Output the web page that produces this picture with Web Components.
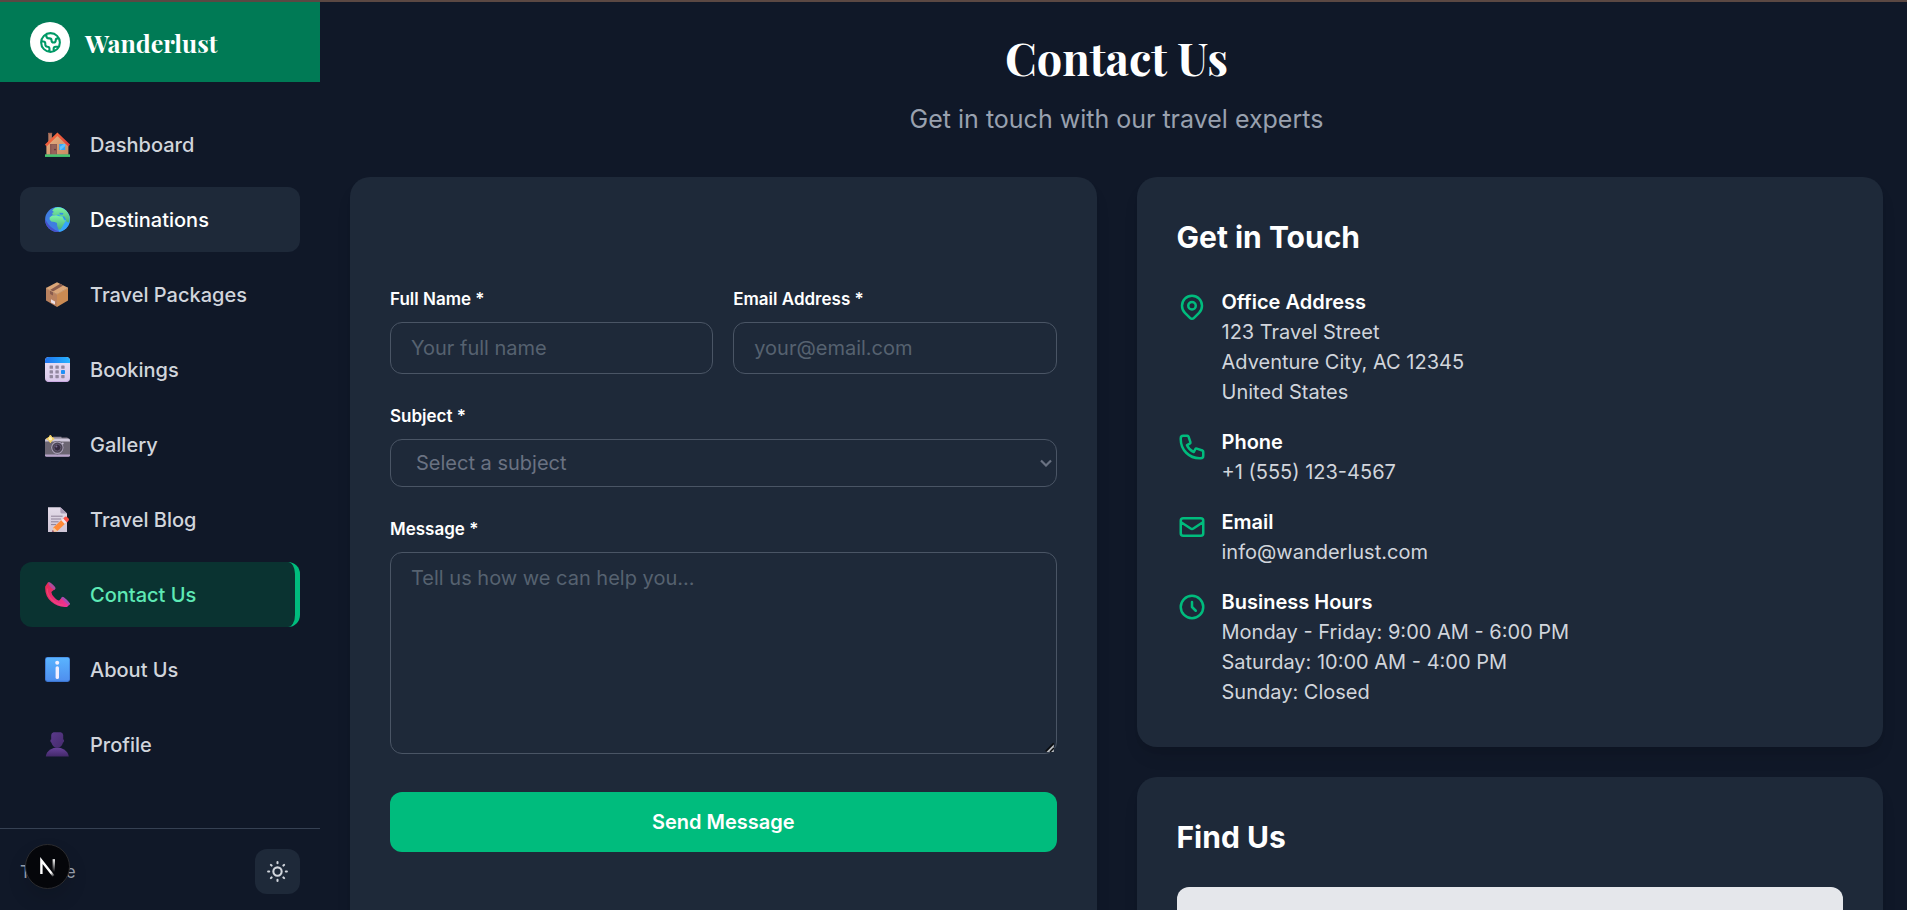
<!DOCTYPE html>
<html lang="en">
<head>
<meta charset="utf-8">
<meta name="viewport" content="width=device-width, initial-scale=1">
<title>Contact Us - Wanderlust</title>
<style>
  :root {
    --page: #101828;
    --card: #1e2939;
    --line: #364153;
    --field-line: #4a5565;
    --soft: #d1d5dc;
    --muted: #99a1af;
    --hint: #566270;
    --green: #00bc7d;
    --display: "Playfair Display", "Liberation Serif", serif;
  }
  html, body { height: 100%; }
  body {
    margin: 0;
    background: var(--page);
    color: #fff;
    font: 400 20px/30px Inter, "Liberation Sans", sans-serif;
    overflow: hidden;
  }
</style>
</head>
<body>
<app-shell>
  <side-bar slot="side">
    <nav-item icon="house">Dashboard</nav-item>
    <nav-item icon="earth" state="hovered">Destinations</nav-item>
    <nav-item icon="box">Travel Packages</nav-item>
    <nav-item icon="calendar">Bookings</nav-item>
    <nav-item icon="camera">Gallery</nav-item>
    <nav-item icon="memo">Travel Blog</nav-item>
    <nav-item icon="phone" state="active">Contact Us</nav-item>
    <nav-item icon="info">About Us</nav-item>
    <nav-item icon="person">Profile</nav-item>
  </side-bar>
  <page-title>Contact Us<span slot="sub">Get in touch with our travel experts</span></page-title>
  <two-columns>
    <panel-card slot="left"><contact-form></contact-form></panel-card>
    <panel-card slot="right" heading="Get in Touch">
      <info-list>
        <info-item icon="pin" heading="Office Address">123 Travel Street<br>Adventure City, AC 12345<br>United States</info-item>
        <info-item icon="call" heading="Phone">+1 (555) 123-4567</info-item>
        <info-item icon="mail" heading="Email">info@wanderlust.com</info-item>
        <info-item icon="clock" heading="Business Hours">Monday - Friday: 9:00 AM - 6:00 PM<br>Saturday: 10:00 AM - 4:00 PM<br>Sunday: Closed</info-item>
      </info-list>
    </panel-card>
    <panel-card slot="right" heading="Find Us"><map-box></map-box></panel-card>
  </two-columns>
</app-shell>
<dev-badge></dev-badge>

<script>
const base = `*, *::before { box-sizing: border-box; } h1, h2, h3, p { margin: 0; }`;

function define(name, render, after) {
  customElements.define(name, class extends HTMLElement {
    constructor() {
      super();
      this.attachShadow({ mode: 'open' });
    }
    connectedCallback() {
      const t = document.createElement('template');
      t.innerHTML = `<style>${base}</style>` + render(this);
      this.shadowRoot.replaceChildren(t.content.cloneNode(true));
      if (after) after(this.shadowRoot);
    }
  });
}

const outline = {
  globe: 'M3.055 11H5a2 2 0 012 2v1a2 2 0 002 2 2 2 0 012 2v2.945M8 3.935V5.5A2.5 2.5 0 0010.5 8h.5a2 2 0 012 2 2 2 0 104 0 2 2 0 012-2h1.064M15 20.488V18a2 2 0 012-2h3.064M21 12a9 9 0 11-18 0 9 9 0 0118 0z',
  sun: 'M12 3v1m0 16v1m9-9h-1M4 12H3m15.364 6.364l-.707-.707M6.343 6.343l-.707-.707m12.728 0l-.707.707M6.343 17.657l-.707.707M16 12a4 4 0 11-8 0 4 4 0 018 0z',
  pin: 'M17.657 16.657L13.414 20.9a1.998 1.998 0 01-2.827 0l-4.244-4.243a8 8 0 1111.314 0zM15 11a3 3 0 11-6 0 3 3 0 016 0z',
  call: 'M3 5a2 2 0 012-2h3.28a1 1 0 01.948.684l1.498 4.493a1 1 0 01-.502 1.21l-2.257 1.13a11.042 11.042 0 005.516 5.516l1.13-2.257a1 1 0 011.21-.502l4.493 1.498a1 1 0 01.684.949V19a2 2 0 01-2 2h-1C9.716 21 3 14.284 3 6V5z',
  mail: 'M3 8l7.89 5.26a2 2 0 002.22 0L21 8M5 19h14a2 2 0 002-2V7a2 2 0 00-2-2H5a2 2 0 00-2 2v10a2 2 0 002 2z',
  clock: 'M12 8v4l3 3m6-3a9 9 0 11-18 0 9 9 0 0118 0z'
};
const strokeIcon = (name, size) =>
  `<svg width="${size}" height="${size}" viewBox="0 0 24 24" fill="none" stroke="currentColor" stroke-width="2" stroke-linecap="round" stroke-linejoin="round" aria-hidden="true"><path d="${outline[name]}"/></svg>`;

const svgUrl = (w, h, body) =>
  `url("data:image/svg+xml,${encodeURIComponent(`<svg xmlns='http://www.w3.org/2000/svg' width='${w}' height='${h}' fill='none'>${body}</svg>`)}")`;
const chevron = svgUrl(12, 8, `<path d='M1 1.5L6 6.500l5-5' stroke='#6a7282' stroke-width='2.2'/>`);
const grip = svgUrl(12, 12, `<path d='M2 10.5L9.8 2.5V11H3z' fill='#b9bcc0'/><path d='M1.8 10.4L9.8 2.4M6 11l4-4' stroke='#07090c' stroke-width='1.6'/>`);

const grad = (id, a, b, dir = 'x2="1" y2="1"') =>
  `<linearGradient id="${id}" x1="0" y1="0" ${dir}><stop stop-color="${a}"/><stop offset="1" stop-color="${b}"/></linearGradient>`;

const pictures = {
  house: `<defs>${grad('a', '#e8b184', '#c98c63')}${grad('b', '#ff7a3c', '#d9393c')}</defs>
    <path d="M3.3 1.6h3.6V10H3.3z" fill="#b97b62"/><path d="M3 .8h4.2v1.4H3z" fill="#9a6454"/>
    <path d="M12.4 2.4L1.4 13.4v9.4h22v-9.4z" fill="url(#a)"/>
    <path d="M12.4.4L0 12.6l1.5 1.8L12.4 4l11 10.4 1.6-1.8z" fill="url(#b)"/>
    <path d="M5 12h7v11H5z" fill="#8a5751"/><path d="M6.4 12.6h4.8V23H6.4z" fill="#96625a"/><circle cx="10" cy="17.6" r=".8" fill="#4f2f33"/>
    <path d="M14.2 12h6v6h-6z" fill="#35a4f5"/><path d="M15 14.8l3.6-2.8h1.6v2L15.8 18H15z" fill="#5fc0ff"/>
    <path d="M0 22.6h25V25H0z" fill="#3fb868"/><path d="M0 22.6h25v.8H0z" fill="#5fcf83"/>`,
  earth: `<defs><clipPath id="c"><circle cx="12.5" cy="12.5" r="12.4"/></clipPath>${grad('b', '#7df5a6', '#4cae7c', 'x2="0" y2="1"')}</defs>
    <circle cx="12.5" cy="12.5" r="12.4" fill="#3f7de0"/><g clip-path="url(#c)">
    <path d="M10 0h15v25H14z" fill="#35a5fa"/><path d="M0 12q5 10 15 13H0z" fill="#474fcb"/>
    <path d="M7.2 3.6l2-2.4L13 .2l4 .6 5 3.2 3 6-1 5.6-2.2-.6-1.4-3.2-2-2.4-3.2-.4-2-1.6-2.2.8-3.4-.4-.4-1.8 1.8-1z" fill="url(#b)"/>
    <path d="M4.6 10.4l2.6-1.8 4-.4 3 1 3.2.4 1.8 3.6 1.8.2-2.2 3.6-1.6 3-1.6 2.4-2 .2-1.4-3.6-.2-3-2.4-1-3.4-.6-1.6-2z" fill="url(#b)"/>
    <path d="M14.4 5.8l4 .2-.6 1.8-3-.4zM17.8 9.8l2 2.8 1.2.2-1.8-3.2z" fill="#328fe6"/></g>`,
  box: `<path d="M12 .2l11 5.6L12 12 1 6z" fill="#dba678"/><path d="M1 6l11 6v13L1 18.6z" fill="#b9815f"/><path d="M23 5.8L12 12v13l11-6.4z" fill="#cb8b53"/>
    <path d="M15.2 1.8l3 1.6L8 9.4v4.2l-3-1.6V8z" fill="#8a5c4d"/><path d="M6 17.2l4 2.2v3.2l-4-2.2z" fill="#eedfe4"/><path d="M1 6l11 6 11-6.2" fill="none" stroke="#e9bc90" stroke-width=".6"/>`,
  calendar: `<defs>${grad('a', '#1f73ee', '#27b3ff', 'x2="1" y2="0"')}${grad('b', '#e9e0f3', '#d9c8ea', 'x2="0" y2="1"')}</defs>
    <rect width="25" height="25" rx="4" fill="url(#b)"/><path d="M0 6V4a4 4 0 014-4h17a4 4 0 014 4v2z" fill="url(#a)"/>
    <path d="M1 22.6q1 2 3 2h17q2 0 3-2" fill="none" stroke="#c59de0" stroke-width=".8"/>
    <g fill="#93889f"><rect x="4.6" y="8.4" width="3.4" height="3.4" rx=".6"/><rect x="10.4" y="8.4" width="3.4" height="3.4" rx=".6"/><rect x="16.2" y="8.4" width="3.4" height="3.4" rx=".6"/><rect x="4.6" y="13.2" width="3.4" height="3.4" rx=".6"/><rect x="10.4" y="13.2" width="3.4" height="3.4" rx=".6"/><rect x="4.6" y="18" width="3.4" height="3.2" rx=".6"/><rect x="10.4" y="18" width="3.4" height="3.2" rx=".6"/><rect x="16.2" y="18" width="3.4" height="3.2" rx=".6"/></g><rect x="16" y="13" width="4" height="4" rx=".8" fill="#1f8ff5"/>`,
  camera: `<path d="M17.2 5.2h5.2l.6 2.4h-6.6z" fill="#5f5968"/><path d="M8 4.8h8.4l1.2 3H6.8z" fill="#8f8799"/><rect y="6.6" width="25" height="18" rx="1.8" fill="#6c6673"/>
    <path d="M0 9.6V8.4q0-1.8 1.8-1.8h21.4q1.8 0 1.8 1.8v1.2z" fill="#cfc7da"/><path d="M0 22.4h25v1q0 1.4-1.6 1.4H1.6Q0 24.8 0 23.4z" fill="#b6a3c9"/>
    <circle cx="12.4" cy="15.6" r="6.6" fill="#3d3847"/><circle cx="12.4" cy="15.6" r="5.8" fill="#4a4453" stroke="#a69db3" stroke-width="1.2"/><circle cx="12.4" cy="15.6" r="3.4" fill="#332a3f" stroke="#6a6078" stroke-width=".8"/><circle cx="11.4" cy="14.4" r="1" fill="#7d6f93"/><circle cx="17.8" cy="11.4" r=".9" fill="#c9c0d4"/>
    <path d="M5.4 3q.8 2.4 3.8 3.8-3 1.4-3.8 4-.8-2.6-3.8-4Q4.6 5.4 5.4 3z" fill="#f2cf63" stroke="#f2cf63" stroke-width="1"/><circle cx="5.4" cy="6.8" r="1.8" fill="#fff0b8"/>`,
  memo: `<defs>${grad('a', '#e4dcea', '#cfc5d6', 'x2="0" y2="1"')}</defs><path d="M3 .2h12.4L22 6.6V25H3z" fill="url(#a)"/><path d="M15.4.2v4.8q0 1.6 1.6 1.6h5z" fill="#ab9db8"/>
    <g stroke="#8e8299" stroke-width="1"><path d="M6 9.2h11.6M6 12h10M6 14.8h7.6M6 17.6h5"/></g>
    <path d="M8.6 20.2l9.2-8.4 3.6 3.6-9 8.6-5 1z" fill="#ff8b38"/><path d="M16.2 13.2l2.6-2.4 3.6 3.6-2.6 2.6z" fill="#f3e6ef"/><path d="M18.2 11.4l1.8-1.6q1-.8 2 .2l1.6 1.6q.8 1 0 2l-1.6 1.8z" fill="#ff5448"/><path d="M8.6 20.2l3.8 3.8-5 1z" fill="#f4c9a0"/><path d="M7.8 23l1.4 1.4-2.4.6z" fill="#84446a"/>`,
  phone: `<defs>${grad('a', '#e3294f', '#f0329a')}</defs><path d="M.2 4.4Q-.4 14 6.4 19.8 13 25.4 22 25l3-3-1-1.6-5.6-4.8-2.2.6-2 2.2q-1.6.4-5-3.2T6.6 9.8l3.2-2.6-.2-1.6L4.2.4 3 .2z" fill="url(#a)"/>
    <path d="M3 .6L4.6.2q1 .2 3.4 2.6t2.6 3.4l-.8 1.6q-1 .4-3.8-2.4T3 .6z" fill="#b04a9b"/><path d="M15.8 16l2-1.2q1.4.4 4 3t3.2 4.2l-1.4 1.2z" fill="#a94bb0"/><path d="M2.2 6.4Q2 13.6 8 18.8q5 4.2 10.4 4.4" fill="none" stroke="#f4527a" stroke-width="1.2" opacity=".6"/>`,
  info: `<defs>${grad('a', '#5ab4ff', '#4f8fee', 'x2="0" y2="1"')}</defs><rect width="25" height="25" rx="2.4" fill="#3c76d2"/><rect x=".8" y=".4" width="23.6" height="23.4" rx="2" fill="url(#a)"/><circle cx="12.2" cy="5.8" r="2" fill="#f3efff"/><rect x="10.6" y="9.2" width="3.4" height="12.8" rx="1.6" fill="#f3efff"/>`,
  person: `<defs>${grad('a', '#5b3a8c', '#442a6b')}${grad('b', '#68429a', '#43296a', 'x2="0" y2="1"')}</defs><path d="M.8 24.4q.4-4.4 4.6-7 3-1.8 6.8-1.8t6.8 1.8q4.2 2.6 4.8 7z" fill="url(#b)"/><path d="M8.6.2h7.2q2.2.4 2.400 2.800v4.400l.8.400v1.600l-1 1.400q-1.600 5-5.800 5t-5.800-5l-1-1.400V7.800l.8-.4V3Q6.400.6 8.600.2z" fill="url(#a)"/>`
};

define('app-shell', () => `
  <style>
    :host { display: grid; grid-template: 2px minmax(0, 1fr) / 320px minmax(0, 1fr); height: 100vh; }
    .edge { grid-column: 1 / -1; background: #5b4843; }
    main { overflow-y: auto; scrollbar-width: none; padding: 30px 24px 30px 30px; }
  </style>
  <div class="edge"></div>
  <slot name="side"></slot>
  <main><slot></slot></main>`);

define('side-bar', () => `
  <style>
    :host { display: flex; flex-direction: column; min-height: 0; }
    header { display: flex; align-items: center; gap: 15px; height: 80px; padding: 0 30px; background: #007a55; flex: none; }
    .logo { display: grid; place-items: center; width: 40px; height: 40px; border-radius: 50%; background: #fff; color: #096; }
    .brand { font: 700 25px/35px var(--display); }
    nav { flex: 1; min-height: 0; overflow-y: auto; scrollbar-width: none; padding: 30px 20px; display: flex; flex-direction: column; gap: 10px; }
    footer { display: flex; align-items: center; justify-content: space-between; padding: 20px 20px 16px; border-top: 1px solid var(--line); color: var(--muted); font-size: 17px; }
    button { display: grid; place-items: center; width: 45px; height: 45px; padding: 0; border: 0; border-radius: 12px; background: var(--card); color: var(--soft); }
  </style>
  <header><span class="logo">${strokeIcon('globe', 25)}</span><span class="brand">Wanderlust</span></header>
  <nav aria-label="Main"><slot></slot></nav>
  <footer><span>Theme</span><button type="button" aria-label="Toggle theme">${strokeIcon('sun', 25)}</button></footer>`);

define('nav-item', el => `
  <style>
    :host { display: block; flex: none; }
    a { display: flex; align-items: center; gap: 20px; height: 65px; padding: 0 25px; border-radius: 12px; color: var(--soft); font-weight: 500; text-decoration: none; }
    svg { flex: none; }
    :host([state="hovered"]) a { background: var(--card); color: #fff; }
    :host([state="active"]) a { background: #0a3331; color: #5ee9b5; border-right: 5px solid var(--green); }
  </style>
  <a href="#"${el.getAttribute('state') === 'active' ? ' aria-current="page"' : ''}><svg width="25" height="25" viewBox="0 0 25 25" aria-hidden="true">${pictures[el.getAttribute('icon')]}</svg><slot></slot></a>`);

define('page-title', () => `
  <style>
    :host { display: block; text-align: center; margin-bottom: 40px; }
    h1 { font: 700 45px/50px var(--display); margin-bottom: 20px; }
    p { font-size: 25px; line-height: 35px; color: var(--muted); }
  </style>
  <h1><slot></slot></h1><p><slot name="sub"></slot></p>`);

define('two-columns', () => `
  <style>
    :host { display: grid; grid-template-columns: repeat(2, minmax(0, 1fr)); gap: 40px; }
    div { display: flex; flex-direction: column; gap: 30px; }
    .left ::slotted(*) { flex: 1; }
  </style>
  <div class="left"><slot name="left"></slot></div>
  <div><slot name="right"></slot></div>`);

define('panel-card', el => `
  <style>
    :host { display: block; box-sizing: border-box; padding: 40px; border-radius: 20px; background: var(--card); box-shadow: 0 12px 18px -4px rgb(0 0 0 / .1), 0 5px 8px -5px rgb(0 0 0 / .1); }
    h2 { font-size: 30px; line-height: 40px; font-weight: 700; margin-bottom: 30px; }
  </style>
  ${el.hasAttribute('heading') ? `<h2>${el.getAttribute('heading')}</h2>` : ''}<slot></slot>`);

define('contact-form', () => `
  <style>
    :host { display: block; padding-top: 70px; }
    form { display: flex; flex-direction: column; gap: 30px; }
    .pair { display: grid; grid-template-columns: repeat(2, minmax(0, 1fr)); gap: 20px; }
    .field { display: flex; flex-direction: column; gap: 10px; }
    label { font-size: 17px; line-height: 25px; font-weight: 600; }
    input, select, textarea { display: block; width: 100%; margin: 0; padding: 10px 20px; border: 1px solid var(--field-line); border-radius: 12px; background: transparent; color: #fff; font: 400 20px/30px Inter, "Liberation Sans", sans-serif; }
    input { height: 52px; }
    select { appearance: none; height: 48px; padding: 8px 25px; color: #6a7282; background: ${chevron} no-repeat right 4px center; }
    textarea { height: 202px; resize: vertical; }
    textarea::-webkit-resizer { background: ${grip} no-repeat right bottom; }
    ::placeholder { color: var(--hint); opacity: 1; }
    button { margin-top: 8px; height: 60px; border: 0; border-radius: 12px; background: var(--green); color: #fff; font: 600 20px/30px Inter, "Liberation Sans", sans-serif; }
  </style>
  <form>
    <div class="pair">
      <div class="field"><label for="name">Full Name *</label><input id="name" type="text" placeholder="Your full name" required></div>
      <div class="field"><label for="email">Email Address *</label><input id="email" type="email" placeholder="your@email.com" required></div>
    </div>
    <div class="field"><label for="subject">Subject *</label><select id="subject" required><option value="">Select a subject</option></select></div>
    <div class="field"><label for="message">Message *</label><textarea id="message" placeholder="Tell us how we can help you..." required></textarea></div>
    <button type="submit">Send Message</button>
  </form>`, root => root.querySelector('form').addEventListener('submit', e => e.preventDefault()));

define('info-list', () => `
  <style>:host { display: flex; flex-direction: column; gap: 20px; }</style><slot></slot>`);

define('info-item', el => `
  <style>
    :host { display: flex; gap: 15px; color: var(--soft); }
    svg { flex: none; margin-top: 5px; color: var(--green); }
    h3 { font-size: 20px; line-height: 30px; font-weight: 600; color: #fff; }
  </style>
  ${strokeIcon(el.getAttribute('icon'), 30)}
  <div><h3>${el.getAttribute('heading')}</h3><p><slot></slot></p></div>`);

define('map-box', () => `
  <style>:host { display: block; height: 320px; border-radius: 12px; background: #e5e7eb; }</style>`);

define('dev-badge', () => `
  <style>
    :host { position: fixed; left: 25px; bottom: 21px; }
    button { display: grid; place-items: center; width: 45px; height: 45px; padding: 0; border: 1px solid #2b2b2e; border-radius: 50%; background: #05060a; box-shadow: 0 10px 20px rgb(0 0 0 / .12); }
  </style>
  <button type="button" aria-label="Open developer tools"><svg width="25" height="25" viewBox="0 0 25 25" fill="none" aria-hidden="true">
    <defs><linearGradient id="d" gradientUnits="userSpaceOnUse" x1="12" y1="12" x2="20" y2="22"><stop stop-color="#fff"/><stop offset=".6" stop-color="#fff"/><stop offset="1" stop-color="#fff" stop-opacity="0"/></linearGradient><linearGradient id="v" gradientUnits="userSpaceOnUse" x1="0" y1="5" x2="0" y2="18"><stop stop-color="#fff"/><stop offset="1" stop-color="#fff" stop-opacity="0"/></linearGradient></defs>
    <path d="M6.4 20V6.400L18.600 22" stroke="url(#d)" stroke-width="2.400"/><path d="M18.800 5.200V18" stroke="url(#v)" stroke-width="2.400"/></svg></button>`);
</script>
</body>
</html>
